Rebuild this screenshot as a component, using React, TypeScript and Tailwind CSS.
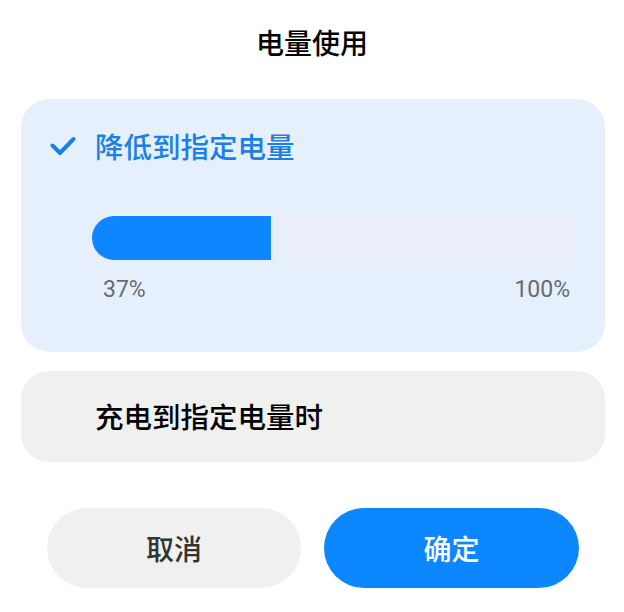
import React from "react";

const font = { fontFamily: '"Noto Sans CJK SC", "Noto Sans", sans-serif' };

export default function App() {
  const pct = 37;
  return (
    <div className="w-[624px] h-[612px] bg-white flex flex-col" style={font}>
      <div className="h-[84px] flex items-center justify-center text-[28px] font-medium text-black leading-none">
        电量使用
      </div>
      <div className="mt-[15px] ml-[21px] w-[584px] h-[253px] rounded-[28px] bg-[#e6f0fd] flex flex-col">
        <div className="h-[94px] flex items-center pl-[29px]">
          <svg width="26" height="20" viewBox="0 0 26 20" fill="none" className="shrink-0">
            <polyline points="2.5,9.5 10,17 23.5,3" stroke="#1a7fe6" strokeWidth="4" strokeLinecap="round" strokeLinejoin="round" />
          </svg>
          <span className="ml-[19px] text-[28.5px] font-medium text-[#1a7fe6] leading-none">降低到指定电量</span>
        </div>
        <div className="mt-[23px] ml-[71px] w-[484px] h-[44px] rounded-r-[12px] bg-[#eaeef8] flex">
          <div className="h-full bg-[#0d86ff] rounded-l-full" style={{ width: `${pct}%` }} />
        </div>
        <div className="mt-[14px] ml-[82px] w-[467px] h-[30px] flex items-center justify-between text-[23px] text-[#666b73] leading-none" style={{ fontFamily: 'Roboto, "Noto Sans", sans-serif' }}>
          <span>37%</span>
          <span>100%</span>
        </div>
      </div>
      <div className="mt-[19px] ml-[21px] w-[584px] h-[91px] rounded-[28px] bg-[#f0f0f0] flex items-center pl-[74px]">
        <span className="text-[28.5px] font-medium text-black leading-none">充电到指定电量时</span>
      </div>
      <div className="mt-[46px] ml-[47px] flex gap-[23px]">
        <button className="w-[254px] h-[80px] rounded-full bg-[#f0f0f0] text-[28px] font-medium text-[#333333] flex items-center justify-center leading-none">
          取消
        </button>
        <button className="w-[255px] h-[80px] rounded-full bg-[#0d87ff] text-[28px] font-medium text-white flex items-center justify-center leading-none">
          确定
        </button>
      </div>
    </div>
  );
}
